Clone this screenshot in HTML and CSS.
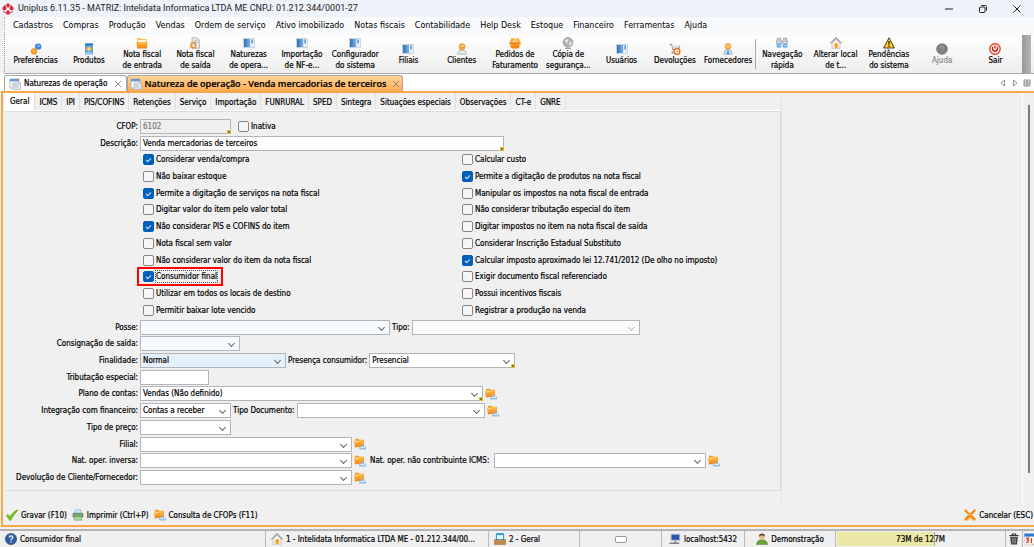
FILE: index.html
```html
<!DOCTYPE html>
<html lang="pt-BR">
<head>
    <meta charset="UTF-8">
    <meta name="viewport" content="width=device-width, initial-scale=1.0">
    <title>Uniplus 6.11.35</title>
    <link rel="stylesheet" href="styles.css">
</head>
<body>
    <!-- icons -->
    <svg class="sprite">
        <defs>
            <linearGradient id="gOrange" x1="0" y1="0" x2="0" y2="1"><stop offset="0" stop-color="#ffc14d"/><stop offset="1" stop-color="#f08010"/></linearGradient>
            <linearGradient id="gBlue" x1="0" y1="0" x2="1" y2="0"><stop offset="0" stop-color="#2f6fb5"/><stop offset="1" stop-color="#7db5e6"/></linearGradient>
        </defs>
        <symbol id="logo" viewBox="0 0 12 12">
            <path d="M4.600 .6h2.800v3L6 4.800 4.600 3.600zM9 2l2.400 2.600v2.600L8.600 7 7.400 5.600zM3 2L.6 4.600v2.600L3.400 7l1.200-1.400zM6 7.200l2 1.200-.4 3H4.400l-.4-3z" fill="#dc2430"/>
            <path d="M3 2l1.600 1.200M9 2L7.400 3.200M1.400 8l2.400 2.400M10.600 8l-2.400 2.400" stroke="#e8636b" stroke-width="1.200"/>
        </symbol>
        <symbol id="gears" viewBox="0 0 12 12">
            <circle cx="8.2" cy="3.6" r="3.2" fill="#3f86e0"/><circle cx="8.6" cy="3" r="1.3" fill="#7db6f5"/>
            <circle cx="4" cy="8.4" r="3.1" fill="#f5941d"/><circle cx="4" cy="8.2" r="1.2" fill="#ffc97a"/>
            <path d="M8 8.6l2 .4-.6 1.6z" fill="#cfd6dd"/>
        </symbol>
        <symbol id="product" viewBox="0 0 12 12">
            <rect x="2" y=".5" width="8" height="11" rx="1" fill="#5aa5ea"/><rect x="2" y=".5" width="8" height="2" fill="#2d72c4"/>
            <path d="M6 3l3 3-3 3-3-3z" fill="#ffb02e"/><path d="M6 4.5L7.5 6 6 7.5 4.5 6z" fill="#ffe08a"/><rect x="3" y="9.6" width="6" height="1" fill="#d6eafc"/>
        </symbol>
        <symbol id="folder" viewBox="0 0 12 12">
            <path d="M1 1h4l1 1h5v8H1z" fill="#f7c46a"/><path d="M2 3h8v3H2z" fill="#fff3d8"/>
            <path d="M.2 5h11.600l-1 6.400H1.200z" fill="url(#gOrange)"/>
        </symbol>
        <symbol id="noteout" viewBox="0 0 12 12">
            <path d="M3 .8h5l2.4 2.4v8H3z" fill="#e6e8ea" stroke="#9a9fa5" stroke-width=".7"/><path d="M8 .8v2.4h2.4" fill="#c3c8ce"/>
            <path d="M4.5 4h4M4.5 5.6h4" stroke="#8d939a" stroke-width=".6"/>
            <circle cx="4.2" cy="8.4" r="2.5" fill="none" stroke="#f28a1e" stroke-width="1.3"/>
        </symbol>
        <symbol id="window" viewBox="0 0 12 12">
            <rect x=".4" y="1.4" width="11.2" height="9.2" fill="#e9f1f8" stroke="#b9c9d8" stroke-width=".7"/>
            <rect x="1" y="2" width="6.2" height="8" fill="url(#gBlue)"/><rect x="8.4" y="2.4" width="1.4" height="4" fill="#4b88c7"/>
        </symbol>
        <symbol id="client" viewBox="0 0 12 12">
            <path d="M1.6 11.2c0-3 1.6-4 4.4-4s4.4 1 4.4 4z" fill="#e9eaec" stroke="#a7abb0" stroke-width=".7"/>
            <circle cx="6" cy="3.8" r="3" fill="#ffc25c" stroke="#e88c16" stroke-width=".9"/><path d="M4.6 4.6q1.4 1 2.8 0" fill="none" stroke="#9b5a0a" stroke-width=".6"/>
        </symbol>
        <symbol id="order" viewBox="0 0 12 12">
            <path d="M1 4l1.600-3.600L5 1.800h2L9.400.4 11 4l-.4 1.400V10L9 11.400H3L1.400 10V5.400z" fill="url(#gOrange)"/>
            <path d="M0 5.600h12v1.600H0z" fill="#f08a1c"/><path d="M3.600 3.600h4.800v1.400H3.600z" fill="#ffe0a2"/>
        </symbol>
        <symbol id="backup" viewBox="0 0 12 12">
            <circle cx="6" cy="5.400" r="4.900" fill="#b4b4b4" stroke="#8f8f8f" stroke-width=".7"/>
            <path d="M2.600 3.400L5.400 2l1.200 2-2 2zM7 6l2.600-1.400.4 2L7.600 9z" fill="#e6e6e6"/><path d="M3 11.400h6" stroke="#a0a0a0"/>
        </symbol>
        <symbol id="returns" viewBox="0 0 12 12">
            <path d="M.6 1.400h2L4 6.600h5.400l1.400-4" fill="none" stroke="#9aa0a6" stroke-width="1.200"/><path d="M3 2.600h6.800L9 5.600H4z" fill="#d9dde1"/>
            <circle cx="8" cy="8.400" r="2.800" fill="#fff" stroke="#ee6f1d" stroke-width="1.500"/><path d="M7 8.400h2" stroke="#ee6f1d"/><circle cx="3.400" cy="9.600" r="1.100" fill="#8d9399"/>
        </symbol>
        <symbol id="supplier" viewBox="0 0 12 12">
            <path d="M2 11.400c0-3.400 1-4.800 4-4.800s4 1.400 4 4.800z" fill="#c9dff3" stroke="#7fa8cf" stroke-width=".7"/>
            <path d="M6 7l1 3.400-1 .8-1-.8z" fill="#2d6fb8"/><circle cx="6" cy="3.400" r="2.800" fill="#ffbf55" stroke="#e88c16" stroke-width=".8"/>
        </symbol>
        <symbol id="binoculars" viewBox="0 0 12 12">
            <path d="M1.600 1h2.800l1 3v3H.4V5zM10.400 1H7.600l-1 3v3h5V5z" fill="#c8ccd1" stroke="#8b9198" stroke-width=".6"/>
            <circle cx="2.900" cy="8.600" r="2.500" fill="#4aa3e8" stroke="#e5eef6" stroke-width=".6"/><circle cx="9.100" cy="8.600" r="2.500" fill="#4aa3e8" stroke="#e5eef6" stroke-width=".6"/>
            <path d="M1.600 8.600h2.600M7.800 8.600h2.600" stroke="#d5ecfb" stroke-width=".9"/>
        </symbol>
        <symbol id="home" viewBox="0 0 12 12">
            <path d="M2 6v5.400h8V6L6 2.400z" fill="#f5f1ea" stroke="#b5b0a8" stroke-width=".6"/><path d="M.4 6.400L6 1l5.600 5.400" fill="none" stroke="#9c9c9c" stroke-width="1.300"/>
            <rect x="4.600" y="6.400" width="3.200" height="4.400" fill="#f59a23"/>
        </symbol>
        <symbol id="warning" viewBox="0 0 12 12">
            <path d="M6 .8L11.400 11H.6z" fill="#ffc81e" stroke="#3a3222" stroke-width=".9" stroke-linejoin="round"/><path d="M6 4v3.600M6 8.600V10" stroke="#222" stroke-width="1.300"/>
        </symbol>
        <symbol id="helpgray" viewBox="0 0 12 12">
            <circle cx="6" cy="6" r="5.800" fill="#7f7f7f"/><path d="M4.400 4.800q0-1.600 1.600-1.600t1.600 1.400q0 .8-.9 1.300-.7.400-.7 1.100M6 8v1.200" fill="none" stroke="#a9a9a9" stroke-width="1"/>
        </symbol>
        <symbol id="power" viewBox="0 0 12 12">
            <circle cx="6" cy="6" r="5.200" fill="#fff" stroke="#e2451f" stroke-width="1.400"/><path d="M3.600 3.800v2a2.400 2.400 0 0 0 4.800 0v-2" fill="none" stroke="#cf2211" stroke-width="1.500"/><path d="M6 2.200v3.400" stroke="#cf2211" stroke-width="1.300"/>
        </symbol>
        <symbol id="form" viewBox="0 0 12 12">
            <rect x="1" y="1" width="9" height="9" fill="#fbfcfd" stroke="#9eacbb" stroke-width=".8"/><rect x="1" y="1" width="9" height="2.400" fill="#6d9ccc"/>
            <rect x="4" y="5" width="7.400" height="6.400" fill="#e3e8ee" stroke="#a5afba" stroke-width=".7"/><path d="M5 7h4M5 9h4" stroke="#9fb0c2" stroke-width=".7"/>
        </symbol>
        <symbol id="lookup" viewBox="0 0 12 12">
            <path d="M1 .8h3.400l1 1H10v6.400H1z" fill="#f3a02c"/><path d="M0 3l9-1.200L10.400 8 1 9.600z" fill="url(#gOrange)"/><path d="M.8 4l4-.6" stroke="#ffe3a6"/>
            <path d="M5.200 8.800h2V6.800h2.400v2H12v2.600H5.200z" fill="#8fbbe8"/><path d="M6.400 9.600h4.600" stroke="#fff" stroke-width=".8"/>
        </symbol>
        <symbol id="check" viewBox="0 0 12 12">
            <path d="M.4 6.800L2 5.400l2 2.400Q7 2.600 11.400.8q.4 0 .4.600Q7.600 5.400 4.600 11.400h-.8z" fill="#76c41c" stroke="#4f9a10" stroke-width=".5"/>
        </symbol>
        <symbol id="printer" viewBox="0 0 12 12">
            <path d="M3 .8h6v4H3z" fill="#d5e8f8" stroke="#8ab" stroke-width=".6"/><rect x=".6" y="3.800" width="10.800" height="5" rx="1" fill="#7d8a93"/>
            <rect x="2" y="5" width="8" height="1.400" fill="#58c43c"/><path d="M2.400 7.600h7.200v3.600H2.400z" fill="#a9dc95" stroke="#6d9b5e" stroke-width=".6"/>
        </symbol>
        <symbol id="cancel" viewBox="0 0 12 12">
            <path d="M0 1.600L2 0Q4 3.400 6 4.400 8 2.600 10.400 0L12 1.600Q10 4.400 7.800 6L12 10l-2 2-4-3.400L2 12l-2-2 4.400-4.400Q1.600 4 0 1.600z" fill="#f58a14"/>
            <path d="M2.600 11.400L6 8.200l3.400 3.200z" fill="#f6dc9a"/><path d="M3 5.800q3-.8 6 0" fill="none" stroke="#ffc56a" stroke-width=".8"/>
        </symbol>
        <symbol id="help" viewBox="0 0 12 12">
            <circle cx="6" cy="6" r="5.600" fill="#2e5e9e" stroke="#1d3f72" stroke-width=".6"/><path d="M4.200 4.600q0-1.800 1.800-1.800t1.800 1.500q0 .9-.9 1.500-.9.500-.9 1.400M6 8.200v1.400" fill="none" stroke="#fff" stroke-width="1.200"/>
        </symbol>
        <symbol id="tray" viewBox="0 0 12 12">
            <path d="M2.400.6h7.200v6H2.400z" fill="#e8f5fd" stroke="#2c94d6" stroke-width="1"/><path d="M3 1.600h6" stroke="#2c94d6"/>
            <path d="M.4 6.400h3l.8 1.400h3.600l.8-1.400h3v5H.4z" fill="#c48a4a" stroke="#94612c" stroke-width=".5"/>
        </symbol>
        <symbol id="pc" viewBox="0 0 12 12">
            <rect x="1.600" y=".8" width="9.600" height="7" fill="#b8bec5"/><rect x="2.600" y="1.800" width="7.600" height="5" fill="#2a55b0"/>
            <path d="M5.400 7.800h2v1.600h-2z" fill="#888"/><path d="M.6 10.200h9.600" stroke="#6f767d" stroke-width="1.400"/>
        </symbol>
        <symbol id="user" viewBox="0 0 12 12">
            <path d="M.6 11.600c0-3.400 2-4.600 5.400-4.600s5.400 1.200 5.400 4.600z" fill="#6ba53a" stroke="#44741f" stroke-width=".5"/>
            <circle cx="6" cy="4" r="2.900" fill="#eab98a"/><path d="M3 3.800Q3 .6 6 .6t3 3.200Q7.600 2.400 6 2.600 4.200 2.600 3 3.800z" fill="#6b4423"/>
        </symbol>
        <symbol id="trash" viewBox="0 0 12 12">
            <path d="M1.400 2.600h9.200M4.400 2.400V1h3.200v1.400" fill="none" stroke="#333" stroke-width="1.200"/><path d="M2.200 4h7.600L9 11.600H3z" fill="#444"/><path d="M4.600 5v5.400M6 5v5.400M7.400 5v5.400" stroke="#bbb" stroke-width=".6"/>
        </symbol>
        <symbol id="calendar" viewBox="0 0 12 12">
            <rect x=".4" y=".6" width="11.600" height="10.800" fill="#fff" stroke="#c9c9c9" stroke-width=".5"/><rect x=".4" y=".6" width="11.600" height="3" fill="#2b7bd6"/>
            <path d="M2 5.200h2.600L3.400 7q1.400.2 1.200 1.400T2 9.600M7.400 5.200v4.800" fill="none" stroke="#e2331f" stroke-width="1.300"/><path d="M8.600 11.400H12V8z" fill="#f28a1e"/>
        </symbol>
    </svg>

    <header class="titlebar">
        <svg class="icon"><use href="#logo"/></svg>
        <h1>Uniplus 6.11.35 - MATRIZ: Intelidata Informatica LTDA ME CNPJ: 01.212.344/0001-27</h1>
        <div class="winbuttons">
            <button aria-label="Minimizar"><svg viewBox="0 0 10 10"><path d="M1 5h8"/></svg></button>
            <button aria-label="Restaurar"><svg viewBox="0 0 10 10"><rect x="1.500" y="3" width="5.500" height="5.500" rx="1"/><path d="M3.500 1.500h4q1 0 1 1v4"/></svg></button>
            <button aria-label="Fechar"><svg viewBox="0 0 10 10"><path d="M1.500 1.500l7 7M8.500 1.500l-7 7"/></svg></button>
        </div>
    </header>

    <nav class="menubar">
        <a href="#">Cadastros</a>
        <a href="#">Compras</a>
        <a href="#">Produção</a>
        <a href="#">Vendas</a>
        <a href="#">Ordem de serviço</a>
        <a href="#">Ativo imobilizado</a>
        <a href="#">Notas fiscais</a>
        <a href="#">Contabilidade</a>
        <a href="#">Help Desk</a>
        <a href="#">Estoque</a>
        <a href="#">Financeiro</a>
        <a href="#">Ferramentas</a>
        <a href="#">Ajuda</a>
    </nav>

    <div class="toolbar">
        <button><svg class="icon"><use href="#gears"/></svg><span>Preferências</span></button>
        <button><svg class="icon"><use href="#product"/></svg><span>Produtos</span></button>
        <button><svg class="icon"><use href="#folder"/></svg><span>Nota fiscal<br>de entrada</span></button>
        <button><svg class="icon"><use href="#noteout"/></svg><span>Nota fiscal<br>de saída</span></button>
        <button><svg class="icon"><use href="#window"/></svg><span>Naturezas<br>de opera...</span></button>
        <button><svg class="icon"><use href="#window"/></svg><span>Importação<br>de NF-e...</span></button>
        <button><svg class="icon"><use href="#window"/></svg><span>Configurador<br>do sistema</span></button>
        <button><svg class="icon"><use href="#window"/></svg><span>Filiais</span></button>
        <button><svg class="icon"><use href="#client"/></svg><span>Clientes</span></button>
        <button><svg class="icon"><use href="#order"/></svg><span>Pedidos de<br>Faturamento</span></button>
        <button><svg class="icon"><use href="#backup"/></svg><span>Cópia de<br>segurança...</span></button>
        <button><svg class="icon"><use href="#window"/></svg><span>Usuários</span></button>
        <button><svg class="icon"><use href="#returns"/></svg><span>Devoluções</span></button>
        <button><svg class="icon"><use href="#supplier"/></svg><span>Fornecedores</span></button>
        <i class="sep"></i>
        <button><svg class="icon"><use href="#binoculars"/></svg><span>Navegação<br>rápida</span></button>
        <button><svg class="icon"><use href="#home"/></svg><span>Alterar local<br>de t...</span></button>
        <button><svg class="icon"><use href="#warning"/></svg><span>Pendências<br>do sistema</span></button>
        <button disabled><svg class="icon"><use href="#helpgray"/></svg><span>Ajuda</span></button>
        <button><svg class="icon"><use href="#power"/></svg><span>Sair</span></button>
        <i class="grip"></i>
    </div>

    <div class="doctabs">
        <div class="doctab">
            <svg class="icon"><use href="#form"/></svg>
            <a href="#">Naturezas de operação</a>
            <button class="close" aria-label="Fechar aba"><svg viewBox="0 0 8 8"><path d="M1 1l6 6M7 1l-6 6"/></svg></button>
        </div>
        <div class="doctab on">
            <svg class="icon"><use href="#form"/></svg>
            <a href="#">Natureza de operação - Venda mercadorias de terceiros</a>
            <button class="close" aria-label="Fechar aba"><svg viewBox="0 0 8 8"><path d="M1 1l6 6M7 1l-6 6"/></svg></button>
        </div>
        <div class="tabnav">
            <button aria-label="Anterior"><svg viewBox="0 0 8 8"><path d="M5.500 1v6L2 4z"/></svg></button>
            <button aria-label="Próxima"><svg viewBox="0 0 8 8"><path d="M2.500 1v6L6 4z"/></svg></button>
            <button aria-label="Lista"><svg viewBox="0 0 8 8"><path d="M1 1h6v6H1zM4 1v6M1 3h6M1 5h6"/></svg></button>
        </div>
    </div>

    <main class="workspace">
        <div class="content">
            <div class="sheet">
                <nav class="subtabs">
                    <a href="#" class="on">Geral</a>
                    <a href="#">ICMS</a>
                    <a href="#">IPI</a>
                    <a href="#">PIS/COFINS</a>
                    <a href="#">Retenções</a>
                    <a href="#">Serviço</a>
                    <a href="#">Importação</a>
                    <a href="#">FUNRURAL</a>
                    <a href="#">SPED</a>
                    <a href="#">Sintegra</a>
                    <a href="#">Situações especiais</a>
                    <a href="#">Observações</a>
                    <a href="#">CT-e</a>
                    <a href="#">GNRE</a>
                </nav>
                <form class="panel">
                    <div class="row">
                        <label class="name" for="cfop">CFOP:</label>
                        <span class="field required w-sm"><input id="cfop" type="text" value="6102" disabled></span>
                        <label class="check spaced"><input type="checkbox"><span>Inativa</span></label>
                    </div>
                    <div class="row">
                        <label class="name" for="descricao">Descrição:</label>
                        <span class="field required w-desc"><input id="descricao" type="text" value="Venda mercadorias de terceiros"></span>
                    </div>
                    <div class="row checks">
                        <label class="check"><input type="checkbox" checked><span>Considerar venda/compra</span></label>
                        <label class="check"><input type="checkbox"><span>Calcular custo</span></label>
                    </div>
                    <div class="row checks">
                        <label class="check"><input type="checkbox"><span>Não baixar estoque</span></label>
                        <label class="check"><input type="checkbox" checked><span>Permite a digitação de produtos na nota fiscal</span></label>
                    </div>
                    <div class="row checks">
                        <label class="check"><input type="checkbox" checked><span>Permite a digitação de serviços na nota fiscal</span></label>
                        <label class="check"><input type="checkbox"><span>Manipular os impostos na nota fiscal de entrada</span></label>
                    </div>
                    <div class="row checks">
                        <label class="check"><input type="checkbox"><span>Digitar valor do item pelo valor total</span></label>
                        <label class="check"><input type="checkbox"><span>Não considerar tributação especial do item</span></label>
                    </div>
                    <div class="row checks">
                        <label class="check"><input type="checkbox" checked><span>Não considerar PIS e COFINS do item</span></label>
                        <label class="check"><input type="checkbox"><span>Digitar impostos no item na nota fiscal de saída</span></label>
                    </div>
                    <div class="row checks">
                        <label class="check"><input type="checkbox"><span>Nota fiscal sem valor</span></label>
                        <label class="check"><input type="checkbox"><span>Considerar Inscrição Estadual Substituto</span></label>
                    </div>
                    <div class="row checks">
                        <label class="check"><input type="checkbox"><span>Não considerar valor do item da nota fiscal</span></label>
                        <label class="check"><input type="checkbox" checked><span>Calcular imposto aproximado lei 12.741/2012 (De olho no imposto)</span></label>
                    </div>
                    <div class="row checks">
                        <label class="check marked"><input type="checkbox" checked><span>Consumidor final</span></label>
                        <label class="check"><input type="checkbox"><span>Exigir documento fiscal referenciado</span></label>
                    </div>
                    <div class="row checks">
                        <label class="check"><input type="checkbox"><span>Utilizar em todos os locais de destino</span></label>
                        <label class="check"><input type="checkbox"><span>Possui incentivos fiscais</span></label>
                    </div>
                    <div class="row checks">
                        <label class="check"><input type="checkbox"><span>Permitir baixar lote vencido</span></label>
                        <label class="check"><input type="checkbox"><span>Registrar a produção na venda</span></label>
                    </div>
                    <div class="row">
                        <label class="name" for="posse">Posse:</label>
                        <span class="field combo pale w-posse"><select id="posse"><option></option></select></span>
                        <label for="tipo">Tipo:</label>
                        <span class="field combo w-tipo"><select id="tipo" disabled><option></option></select></span>
                    </div>
                    <div class="row">
                        <label class="name" for="consignacao">Consignação de saída:</label>
                        <span class="field combo pale w-cons"><select id="consignacao"><option></option></select></span>
                    </div>
                    <div class="row">
                        <label class="name" for="finalidade">Finalidade:</label>
                        <span class="field combo hot w-md"><select id="finalidade"><option>Normal</option></select></span>
                        <label for="presenca">Presença consumidor:</label>
                        <span class="field combo required w-md"><select id="presenca"><option>Presencial</option></select></span>
                    </div>
                    <div class="row">
                        <label class="name" for="tributacao">Tributação especial:</label>
                        <span class="field w-xs"><input id="tributacao" type="text"></span>
                    </div>
                    <div class="row">
                        <label class="name" for="plano">Plano de contas:</label>
                        <span class="field combo required w-plano"><select id="plano"><option>Vendas (Não definido)</option></select></span>
                        <button type="button" class="lookup" aria-label="Consultar"><svg class="icon"><use href="#lookup"/></svg></button>
                    </div>
                    <div class="row">
                        <label class="name" for="integracao">Integração com financeiro:</label>
                        <span class="field combo w-sm"><select id="integracao"><option>Contas a receber</option></select></span>
                        <label for="tipodoc">Tipo Documento:</label>
                        <span class="field combo w-doc"><select id="tipodoc"><option></option></select></span>
                        <button type="button" class="lookup" aria-label="Consultar"><svg class="icon"><use href="#lookup"/></svg></button>
                    </div>
                    <div class="row">
                        <label class="name" for="preco">Tipo de preço:</label>
                        <span class="field combo w-sm"><select id="preco"><option></option></select></span>
                    </div>
                    <div class="row">
                        <label class="name" for="filial">Filial:</label>
                        <span class="field combo w-lg"><select id="filial"><option></option></select></span>
                        <button type="button" class="lookup" aria-label="Consultar"><svg class="icon"><use href="#lookup"/></svg></button>
                    </div>
                    <div class="row">
                        <label class="name" for="inversa">Nat. oper. inversa:</label>
                        <span class="field combo w-lg"><select id="inversa"><option></option></select></span>
                        <button type="button" class="lookup" aria-label="Consultar"><svg class="icon"><use href="#lookup"/></svg></button>
                        <label for="icms">Nat. oper. não contribuinte ICMS:</label>
                        <span class="field combo w-lg"><select id="icms"><option></option></select></span>
                        <button type="button" class="lookup" aria-label="Consultar"><svg class="icon"><use href="#lookup"/></svg></button>
                    </div>
                    <div class="row">
                        <label class="name" for="devolucao">Devolução de Cliente/Fornecedor:</label>
                        <span class="field combo w-lg"><select id="devolucao"><option></option></select></span>
                        <button type="button" class="lookup" aria-label="Consultar"><svg class="icon"><use href="#lookup"/></svg></button>
                    </div>
                </form>
            </div>
            <div class="scroll"><i class="thumb"></i></div>
        </div>
        <div class="actions">
            <button><svg class="icon"><use href="#check"/></svg>Gravar (F10)</button>
            <button><svg class="icon"><use href="#printer"/></svg>Imprimir (Ctrl+P)</button>
            <button><svg class="icon"><use href="#lookup"/></svg>Consulta de CFOPs (F11)</button>
            <button class="last"><svg class="icon"><use href="#cancel"/></svg>Cancelar (ESC)</button>
        </div>
    </main>

    <footer class="statusbar">
        <div><svg class="icon"><use href="#help"/></svg><span>Consumidor final</span></div>
        <div><svg class="icon"><use href="#home"/></svg><span>1 - Intelidata Informatica LTDA ME - 01.212.344/00...</span></div>
        <div><svg class="icon"><use href="#tray"/></svg><span>2 - Geral</span></div>
        <div class="center"><i class="pill"></i></div>
        <div class="center"><svg class="icon"><use href="#pc"/></svg><span>localhost:5432</span></div>
        <div class="center"><svg class="icon"><use href="#user"/></svg><span>Demonstração</span></div>
        <div class="memory"><i class="used" style="width: 58%"></i><span>73M de 127M</span></div>
        <div class="center"><svg class="icon"><use href="#trash"/></svg></div>
        <div class="cut"><svg class="icon"><use href="#calendar"/></svg></div>
    </footer>
</body>
</html>
```
FILE: styles.css
```css
*, *::before, *::after {
    box-sizing: border-box;
    margin: 0;
    padding: 0;
}
body {
    display: flex;
    flex-direction: column;
    min-height: 100vh;
    overflow: hidden;
    background-color: #f0f0f0;
    color: #000;
    font: 8px/11px "DejaVu Sans Condensed", "DejaVu Sans", sans-serif;
    -webkit-text-stroke: 0.2px currentColor;
    white-space: nowrap;
}
button, input, select {
    font: inherit;
    color: inherit;
    border: 0;
    border-radius: 0;
    background: none;
}
a {
    color: inherit;
    text-decoration: none;
}
.sprite {
    position: absolute;
    width: 0;
    height: 0;
}
.icon {
    display: block;
    width: 12px;
    height: 12px;
    flex: none;
}

/* title bar */
.titlebar {
    display: flex;
    align-items: center;
    gap: 4px;
    height: 17px;
    padding-left: 2px;
    background-color: #eef3fa;
}
.titlebar h1 {
    font: 400 9px/17px Roboto, sans-serif;
    color: #222;
    -webkit-text-stroke: 0;
}
.winbuttons {
    display: flex;
    margin-left: auto;
}
.winbuttons button {
    display: flex;
    justify-content: center;
    width: 34px;
}
.winbuttons svg {
    width: 10px;
    height: 10px;
    fill: none;
    stroke: #222;
}

/* menu */
.menubar {
    display: flex;
    gap: 10px;
    height: 18px;
    padding-left: 8px;
    margin-left: 4px;
    border-left: 1px dotted #aaa;
    background-color: #f9fafb;
    font-family: "DejaVu Sans", sans-serif;
    line-height: 18px;
    -webkit-text-stroke: 0;
}

/* toolbar */
.toolbar {
    display: flex;
    height: 39px;
    padding: 0 3px 0 4px;
    margin-left: 4px;
    border-left: 1px dotted #999;
    border-bottom: 1px solid #ababab;
    background: linear-gradient(#fefefe, #eeeeee);
}
.toolbar button {
    display: flex;
    flex: 1;
    flex-direction: column;
    align-items: center;
    justify-content: center;
    min-width: 0;
}
.toolbar button:disabled {
    color: #8a8a8a;
}
.toolbar .sep {
    width: 1px;
    margin: 4px 0;
    background-color: #aaa;
}
.toolbar .grip {
    width: 9px;
    background: linear-gradient(90deg, #999, #b5b5b5);
}

/* document tabs */
.doctabs {
    display: flex;
    height: 17px;
    padding-left: 4px;
    background-color: #fff;
}
.doctab {
    display: flex;
    align-items: center;
    gap: 3px;
    padding: 0 4px;
    margin-top: 1px;
    border: 1px solid #a5a5a5;
    border-bottom: 0;
    border-radius: 3px 3px 0 0;
}
.doctab .close {
    margin-left: 4px;
}
.doctab.on {
    gap: 2px;
    padding: 0 2px;
    background: linear-gradient(#ffd596, #ffad55);
    font: 600 9px/11px "Open Sans", sans-serif;
}
.close svg, .tabnav svg {
    display: block;
    width: 8px;
    height: 8px;
    fill: none;
    stroke: #777;
    stroke-width: 0.8;
}
.tabnav {
    display: flex;
    align-items: center;
    gap: 4px;
    margin-left: auto;
    padding-right: 3px;
}

/* work area */
.workspace {
    display: flex;
    flex: 1;
    flex-direction: column;
    margin-left: 1px;
    border: 2px solid #f7a64a;
    border-right: 0;
}
.content {
    display: flex;
    flex: 1;
}
.sheet {
    display: flex;
    flex: 0 1 779px;
    flex-direction: column;
    padding-left: 2px;
    padding-bottom: 14px;
    border-right: 1px solid #e2e2e2;
}
.subtabs {
    display: flex;
    height: 18px;
    border-bottom: 1px solid #fff;
    line-height: 19px;
}
.subtabs a {
    padding: 0 4px;
    border-right: 1px solid #e0e0e0;
}
.subtabs .on {
    padding: 0 5px;
    background-color: #fff;
    line-height: 18px;
}
.panel {
    display: grid;
    flex: 1;
    grid-auto-rows: minmax(16px, 1fr);
    padding: 6px 0 4px;
    border: 1px solid #dcdcdc;
    border-left: 0;
}
.scroll {
    display: flex;
    justify-content: center;
    width: 12px;
    margin-left: auto;
    border-left: 1px solid #fff;
}
.thumb {
    width: 2px;
    margin: 12px 0 32px;
    background-color: #7b7b7b;
}

/* form rows */
.row {
    display: flex;
    align-items: center;
    gap: 2px;
}
.row .name {
    width: 133px;
    text-align: right;
}
.field {
    position: relative;
    display: flex;
    height: 15px;
    border: 1px solid #b3b5bd;
    background-color: #fff;
}
.field input, .field select {
    width: 100%;
    padding: 0 2px;
    appearance: none;
    outline: 0;
}
.field input:disabled {
    background-color: #efefef;
    color: #777;
}
.field select:disabled {
    background-color: #fafafa;
}
.combo::after {
    content: "";
    position: absolute;
    top: 4px;
    right: 5px;
    width: 5px;
    height: 5px;
    border: solid #666;
    border-width: 0 1px 1px 0;
    transform: rotate(45deg);
}
.combo:has(:disabled)::after {
    border-color: #bbb;
}
.required::before {
    content: "";
    position: absolute;
    right: -1px;
    bottom: -1px;
    width: 4px;
    height: 4px;
    border: 1px solid #dcc03c;
    background-color: #8a7a1c;
}
.pale {
    background-color: #f5fafe;
}
.hot {
    background-color: #e4f1fb;
}
.w-xs { width: 69px; }
.w-sm { width: 91px; }
.w-cons { width: 100px; }
.w-md { width: 146px; }
.w-doc { width: 188px; }
.w-lg { width: 212px; }
.w-tipo { width: 228px; }
.w-posse { width: 250px; }
.w-plano { width: 343px; }
.w-desc { width: 364px; }

.checks {
    display: grid;
    grid-template-columns: 319px 1fr;
    padding-left: 138px;
    gap: 0;
}
.check {
    position: relative;
    display: flex;
    align-items: center;
    justify-self: start;
    gap: 2px;
}
.check.spaced {
    margin-left: 5px;
}
.check input {
    display: grid;
    place-items: center;
    width: 11px;
    height: 11px;
    appearance: none;
    border: 1px solid #858585;
    border-radius: 2px;
    background-color: #f6f6f6;
}
.check input:checked {
    border-color: #005fb8;
    background-color: #005fb8;
}
.check input:checked::after {
    content: "";
    width: 5px;
    height: 3px;
    border: solid #d5e6f6;
    border-width: 0 0 1px 1px;
    transform: rotate(-45deg);
}
.marked span {
    outline: 1px dotted #555;
}
.marked::after {
    content: "";
    position: absolute;
    inset: -4px -6px;
    border: 2px solid #ff0000;
}
.lookup + label {
    margin: 0 3px 0 2px;
}

/* bottom actions */
.actions {
    display: flex;
    gap: 5px;
    height: 20px;
    padding: 0 1px 0 3px;
}
.actions button {
    display: flex;
    align-items: center;
    gap: 3px;
}
.actions .last {
    margin-left: auto;
}

/* status bar */
.statusbar {
    display: grid;
    grid-template-columns: 266fr 223fr 91fr 82fr 83fr 91fr 170fr 17fr 11fr;
    height: 18px;
    margin-top: 2px;
    border-top: 2px solid #b4b4b4;
}
.statusbar > div {
    display: flex;
    align-items: center;
    gap: 3px;
    min-width: 0;
    padding-left: 5px;
    border-right: 1px solid #b9b9b9;
}
.statusbar .center {
    justify-content: center;
    padding-left: 0;
}
.pill {
    width: 12px;
    height: 7px;
    border: 1px solid #999;
    border-radius: 2px;
    background-color: #fff;
}
.statusbar .memory {
    position: relative;
    justify-content: center;
    padding: 0;
}
.used {
    position: absolute;
    inset: 1px auto 1px 1px;
    border-right: 1px solid #a9a48a;
    background-color: #ece8a8;
}
.memory span {
    position: relative;
}
.statusbar .cut {
    padding-left: 1px;
    border-right: 0;
    overflow: hidden;
}
```
